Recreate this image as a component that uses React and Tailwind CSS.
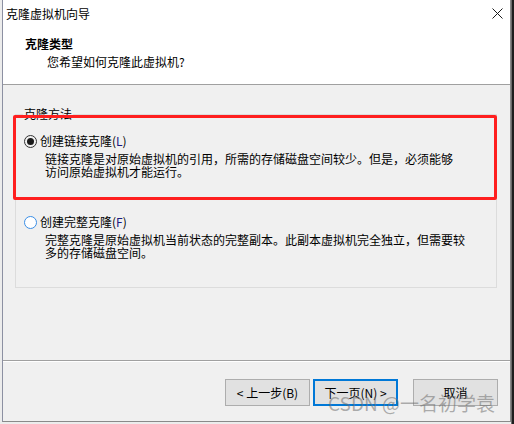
import React from "react";

const font = { fontFamily: '"Noto Sans CJK SC", "Noto Sans", sans-serif' };

function Radio({ checked }) {
  if (checked) {
    return (
      <span className="flex h-[13px] w-[13px] shrink-0 items-center justify-center rounded-full border border-[#333333] bg-[#f0f0f0]">
        <span className="h-[7px] w-[7px] rounded-full bg-[#1a1a1a]" />
      </span>
    );
  }
  return (
    <span className="h-[13px] w-[13px] shrink-0 rounded-full border-[1.5px] border-[#3a8ee6] bg-white" />
  );
}

function Option({ checked, label, accel, lines, className }) {
  return (
    <div className={className}>
      <div className="flex h-[16px] items-center pl-[8px]">
        <Radio checked={checked} />
        <span className="ml-[3px] text-[12px] leading-[16px] text-black">
          {label}(<span className="text-[#1a1a80]">{accel}</span>)
        </span>
      </div>
      <div className="mt-[3px] pl-[29px] text-[12px] leading-[13px] text-black">
        {lines.map((l, i) => (
          <div key={i} className="whitespace-nowrap">{l}</div>
        ))}
      </div>
    </div>
  );
}

function Button({ children, focused }) {
  return (
    <div
      className={
        "flex h-[27px] w-[85px] items-center justify-center bg-[#e1e1e1] text-[12px] text-black " +
        (focused ? "border-2 border-[#0078d7]" : "border border-[#adadad]")
      }
    >
      {children}
    </div>
  );
}

export default function App() {
  return (
    <div className="relative flex h-[424px] w-[514px] overflow-hidden bg-[#ececec]" style={font}>
      <div className="w-[2px] shrink-0 bg-[#ececec]" />
      <div className="flex h-[422px] w-[509px] shrink-0 flex-col border-l border-r border-b border-l-[#8c90a2] border-r-[#8a8a8a] border-b-[#8a8a8a] bg-[#f0f0f0]">
        {/* white header */}
        <div className="h-[85px] shrink-0 border-b border-[#a0a0a0] bg-white">
          <div className="flex h-[27px] items-center justify-between">
            <span className="pl-[3px] text-[12px] leading-[16px] text-black">克隆虚拟机向导</span>
            <svg className="mr-[7px]" width="11" height="11" viewBox="0 0 11 11">
              <path d="M0.5 0.5 L10.5 10.5 M10.5 0.5 L0.5 10.5" stroke="#1a1a1a" strokeWidth="1" fill="none" />
            </svg>
          </div>
          <div className="mt-[9px] pl-[22px] text-[12px] font-bold leading-[16px] text-black">克隆类型</div>
          <div className="mt-[2px] pl-[44px] text-[12px] leading-[16px] text-black">您希望如何克隆此虚拟机?</div>
        </div>

        {/* gray body */}
        <div className="h-[275px] shrink-0 pt-[21px]">
          <fieldset className="ml-[12px] w-[482px] border border-[#dcdcdc] pb-[28px] pt-[11px]">
            <legend className="ml-[7px] px-[1px] text-[12px] leading-[16px] text-black">克隆方法</legend>
            <Option
              checked
              label="创建链接克隆"
              accel="L"
              lines={["链接克隆是对原始虚拟机的引用，所需的存储磁盘空间较少。但是，必须能够", "访问原始虚拟机才能运行。"]}
            />
            <Option
              className="mt-[36px]"
              label="创建完整克隆"
              accel="F"
              lines={["完整克隆是原始虚拟机当前状态的完整副本。此副本虚拟机完全独立，但需要较", "多的存储磁盘空间。"]}
            />
          </fieldset>
        </div>

        {/* separator */}
        <div className="h-[2px] shrink-0 border-t border-b border-t-[#a0a0a0] border-b-white" />

        {/* buttons */}
        <div className="flex flex-1 justify-end pr-[12px] pt-[17px]">
          <Button>&lt; 上一步(B)</Button>
          <div className="ml-[3px]">
            <Button focused>下一页(N) &gt;</Button>
          </div>
          <div className="ml-[15px]">
            <Button>取消</Button>
          </div>
        </div>
      </div>
      <div className="flex w-[3px] shrink-0">
        <div className="w-[1px] bg-[#6a6a6a]" />
        <div className="w-[2px] bg-[#1e1e1e]" />
      </div>

      {/* red annotation box */}
      <div className="absolute left-[13px] top-[115px] h-[85px] w-[484px] rounded-[2px] border-[3px] border-[#ff1f1f]" />

      {/* watermark */}
      <div className="pointer-events-none absolute left-[328px] top-[391px] whitespace-nowrap text-[19px] leading-[24px] text-[rgba(110,110,110,0.55)]">
        CSDN @一名初学袁
      </div>
    </div>
  );
}
